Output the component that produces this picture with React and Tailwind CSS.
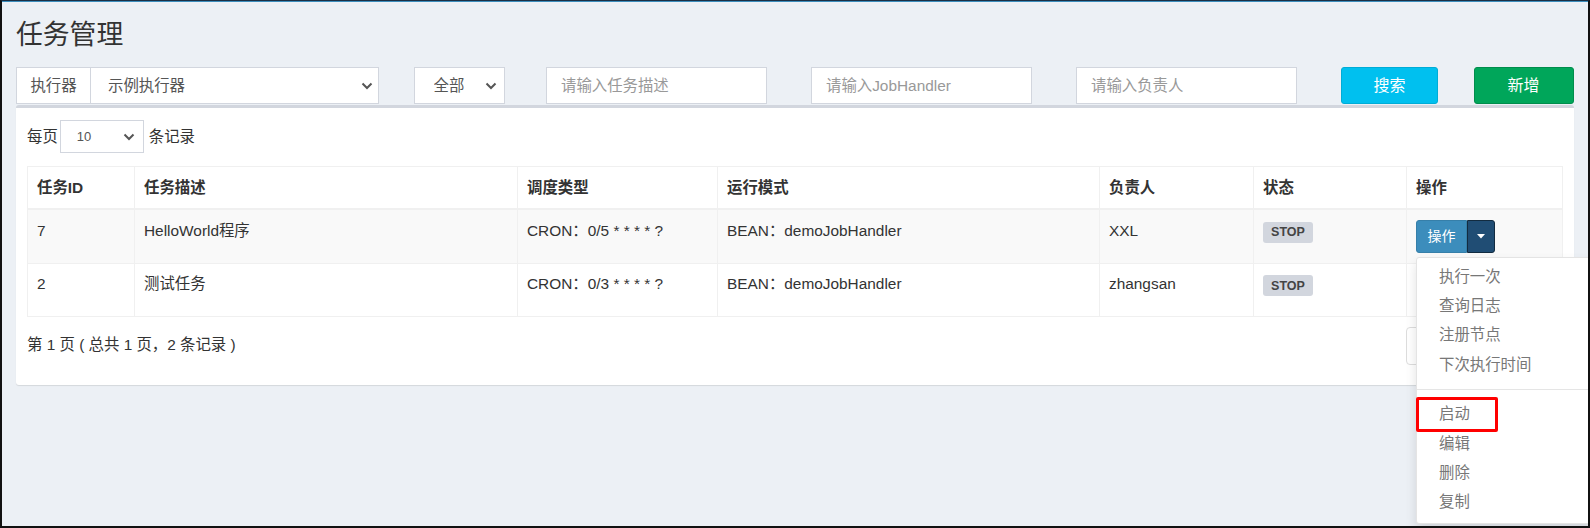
import React from 'react'

const font = { fontFamily: '"Liberation Sans", "Noto Sans CJK SC", sans-serif' }

const Chevron = ({ className = '' }) => (
  <svg
    width="12"
    height="8"
    viewBox="0 0 12 8"
    className={`pointer-events-none absolute top-1/2 -translate-y-1/2 ${className}`}
  >
    <polyline points="1.5,1.5 6,6 10.5,1.5" fill="none" stroke="#555" strokeWidth="2" />
  </svg>
)

const OpButton = ({ open }) => (
  <div className={`relative inline-flex h-[33px] align-top ${open ? '' : 'invisible'}`}>
    <button className="w-[51px] h-full bg-[#3c8dbc] border border-[#367fa9] rounded-l-[3px] text-white text-[14px]">
      操作
    </button>
    <button className="w-[28px] h-full bg-[#204d74] border border-[#122b40] rounded-r-[3px] flex items-center justify-center">
      <svg width="8" height="5" viewBox="0 0 8 5">
        <polygon points="0,0 8,0 4,4.5" fill="#fff" />
      </svg>
    </button>
    {open && (
      <div className="absolute left-0 top-full mt-[4px] z-10 w-[180px] bg-white border border-[#e4e4e4] rounded-[3px] pt-[4.5px] pb-[5.5px] shadow-[0_6px_12px_rgba(0,0,0,0.12)] text-left">
        {['执行一次', '查询日志', '注册节点', '下次执行时间'].map((t) => (
          <div key={t} className="px-[22px] py-[3.7px] leading-[22px] text-[#777]">
            {t}
          </div>
        ))}
        <div className="my-[9.5px] h-px bg-[#e5e5e5]" />
        {['启动', '编辑', '删除', '复制'].map((t) => (
          <div key={t} className="relative px-[22px] py-[3.7px] leading-[22px] text-[#777]">
            {t}
            {t === '启动' && (
              <span className="absolute left-[-1px] -top-[3px] -bottom-[3px] w-[82px] border-[3px] border-[#ff0000] rounded-[2px]" />
            )}
          </div>
        ))}
      </div>
    )}
  </div>
)

const Stop = () => (
  <span className="mt-[2px] flex items-center justify-center w-[50px] h-[21px] bg-[#d2d6de] text-[#444] font-bold text-[12.5px] rounded-[3px]">
    STOP
  </span>
)

const rows = [
  { id: 7, desc: 'HelloWorld程序', cron: 'CRON：0/5 * * * * ?', mode: 'BEAN：demoJobHandler', author: 'XXL', open: true },
  { id: 2, desc: '测试任务', cron: 'CRON：0/3 * * * * ?', mode: 'BEAN：demoJobHandler', author: 'zhangsan', open: false },
]

const heads = ['任务ID', '任务描述', '调度类型', '运行模式', '负责人', '状态', '操作']
const widths = ['w-[107px]', 'w-[383px]', 'w-[200px]', 'w-[382px]', 'w-[154px]', 'w-[153px]', '']

const td = 'border border-[#f0f0f0] px-[9px] pt-[9.5px] pb-[10px] align-top leading-[22px]'

export default function App() {
  return (
    <div
      style={font}
      className="relative w-[1590px] h-[528px] overflow-hidden bg-[#ecf0f5] border-t border-t-[#1b2f45] border-l-2 border-r-2 border-b-2 border-[#111] text-[#333] text-[15.4px]"
    >
      <div className="h-px bg-[#3c8dbc]" />

      <div className="pl-[14px] pr-[14px]">
        {/* ── Header */}
        <h1 className="pt-[19px] text-[26.8px] leading-[29px] font-normal text-[#333]">任务管理</h1>

        {/* ── Filters */}
        <div className="mt-[17px] grid grid-cols-12 gap-x-[30px] w-[1560px] h-[37px]">
          <div className="col-span-3 flex w-[363px] h-full">
            <span className="w-[75px] flex items-center justify-center bg-white border border-[#d2d6de] text-[#555]">
              执行器
            </span>
            <div className="relative flex-1 h-full">
              <select className="appearance-none w-full h-full bg-white border border-l-0 border-[#d2d6de] pl-[17px] text-[#555] outline-none">
                <option>示例执行器</option>
              </select>
              <Chevron className="right-[6px]" />
            </div>
          </div>
          <div className="col-span-1 relative w-[91px] h-full">
            <select className="appearance-none w-full h-full bg-white border border-[#d2d6de] pl-[19px] text-[#555] outline-none">
              <option>全部</option>
            </select>
            <Chevron className="right-[8px]" />
          </div>
          {['请输入任务描述', '请输入JobHandler', '请输入负责人'].map((p) => (
            <div key={p} className="col-span-2">
              <input
                placeholder={p}
                className="w-[221px] h-[37px] bg-white border border-[#d2d6de] px-[14px] outline-none placeholder:text-[#999]"
              />
            </div>
          ))}
          <div className="col-span-1">
            <button className="w-[97px] h-[37px] bg-[#00c0ef] border border-[#00acd6] rounded-[3px] text-white text-[16px]">
              搜索
            </button>
          </div>
          <div className="col-span-1">
            <button className="w-[100px] h-[37px] bg-[#00a65a] border border-[#008d4c] rounded-[3px] text-white text-[16px]">
              新增
            </button>
          </div>
        </div>

        {/* ── Box */}
        <div className="mt-px w-[1558px] bg-white border-t-[3px] border-[#d2d6de] rounded-[3px] shadow-[0_1px_1px_rgba(0,0,0,0.1)] px-[11px] pt-[12px] pb-[11px]">
          <div className="flex items-center h-[33px]">
            <span>每页</span>
            <div className="relative ml-[2px] w-[84px] h-[33px]">
              <select className="appearance-none w-full h-full bg-white border border-[#d2d6de] pl-[16px] text-[13px] text-[#555] outline-none">
                <option>10</option>
              </select>
              <Chevron className="right-[9px]" />
            </div>
            <span className="ml-[5px]">条记录</span>
          </div>

          <table className="mt-[13px] w-full table-fixed border-collapse">
            <thead>
              <tr>
                {heads.map((h, i) => (
                  <th
                    key={h}
                    className={`${widths[i]} border border-[#f0f0f0] border-b-2 px-[9px] py-[9.5px] text-left font-bold leading-[22px]`}
                  >
                    {h}
                  </th>
                ))}
              </tr>
            </thead>
            <tbody>
              {rows.map((r, idx) => (
                <tr key={r.id} className={idx === 0 ? 'bg-[#f9f9f9]' : ''}>
                  <td className={td}>{r.id}</td>
                  <td className={td}>{r.desc}</td>
                  <td className={td}>{r.cron}</td>
                  <td className={td}>{r.mode}</td>
                  <td className={td}>{r.author}</td>
                  <td className={td}>
                    <Stop />
                  </td>
                  <td className={td}>
                    <OpButton open={r.open} />
                  </td>
                </tr>
              ))}
            </tbody>
          </table>

          {/* ── Pagination (mostly hidden behind the open menu) */}
          <div className="mt-[10px] mb-[9px] flex justify-between items-start">
            <span className="pt-[7px] leading-[22px]">第 1 页 ( 总共 1 页，2 条记录 )</span>
            <div className="flex h-[38px] w-[157px] border border-[#ddd] rounded-[4px] overflow-hidden">
              <span className="flex-1 border-r border-[#ddd]" />
              <span className="flex-1" />
            </div>
          </div>
        </div>
      </div>
    </div>
  )
}
